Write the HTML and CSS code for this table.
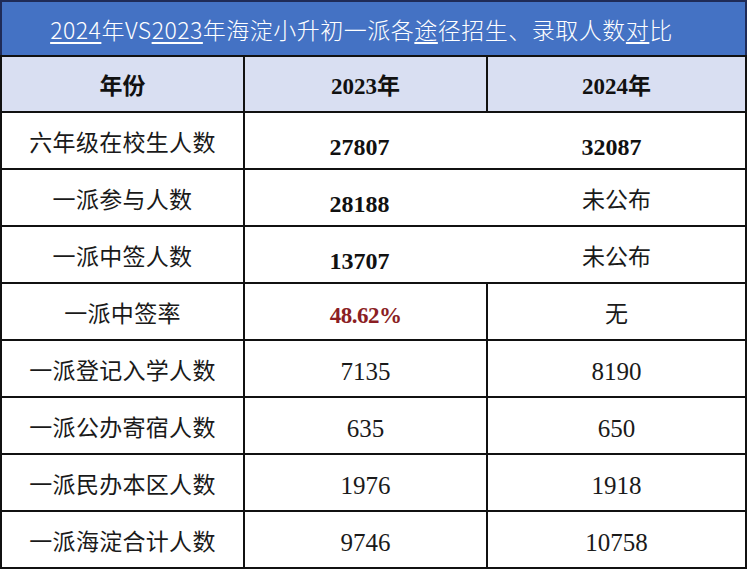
FILE: index.html
```html
<!DOCTYPE html>
<html lang="zh-CN">
<head>
<meta charset="utf-8">
<title>2024年VS2023年海淀小升初一派各途径招生、录取人数对比</title>
<link rel="stylesheet" href="styles.css">
</head>
<body>
<table class="sheet">
  <colgroup>
    <col class="c1">
    <col class="c2">
    <col class="c3">
  </colgroup>
  <tr class="title-row">
    <td colspan="3" class="title"><u>2024</u>年VS<u>2023</u>年海淀小升初一派各<u>途</u>径招生、录取人数<u>对</u>比</td>
  </tr>
  <tr class="head-row">
    <th>年份</th>
    <th class="num-head">2023年</th>
    <th class="num-head">2024年</th>
  </tr>
  <tr>
    <td class="label">六年级在校生人数</td>
    <td class="num bold low shift nr">27807</td>
    <td class="num bold low shift3 nl">32087</td>
  </tr>
  <tr>
    <td class="label">一派参与人数</td>
    <td class="num bold low shift nr">28188</td>
    <td class="cjk nl">未公布</td>
  </tr>
  <tr>
    <td class="label">一派中签人数</td>
    <td class="num bold low shift nr">13707</td>
    <td class="cjk nl">未公布</td>
  </tr>
  <tr>
    <td class="label">一派中签率</td>
    <td class="num rate lowish">48.62%</td>
    <td class="cjk">无</td>
  </tr>
  <tr>
    <td class="label">一派登记入学人数</td>
    <td class="num plain">7135</td>
    <td class="num plain">8190</td>
  </tr>
  <tr>
    <td class="label">一派公办寄宿人数</td>
    <td class="num plain">635</td>
    <td class="num plain">650</td>
  </tr>
  <tr>
    <td class="label">一派民办本区人数</td>
    <td class="num plain">1976</td>
    <td class="num plain">1918</td>
  </tr>
  <tr>
    <td class="label">一派海淀合计人数</td>
    <td class="num plain">9746</td>
    <td class="num plain">10758</td>
  </tr>
</table>
</body>
</html>
```

FILE: styles.css
```css
html, body {
  margin: 0;
  padding: 0;
  background: #ffffff;
}

.sheet {
  width: 747px;
  border-collapse: collapse;
  table-layout: fixed;
  font-family: "Noto Sans CJK SC", "Noto Sans", sans-serif;
  color: #111111;
}

.c1 { width: 243px; }
.c2 { width: 243px; }

.sheet td,
.sheet th {
  border: 2px solid #111111;
  padding: 0;
  text-align: center;
  vertical-align: middle;
}

.sheet tr { height: 57px; }
.sheet tr.title-row { height: 55px; }
.sheet tr.head-row { height: 56px; }

.sheet td.title {
  background: #4472c4;
  color: #ffffff;
  font-size: 23px;
  font-weight: 300;
  letter-spacing: 0.5px;
  padding-right: 24px;
  border-top-color: #1f2b57;
  border-left-color: #1f2b57;
  border-right-color: #1f2b57;
}

.title u {
  text-decoration-thickness: 1.5px;
  text-underline-offset: 3px;
}

.head-row th {
  background: #d9dff2;
  font-size: 23px;
  font-weight: 700;
  color: #111111;
}

.num-head {
  font-family: "Liberation Serif", "Noto Sans CJK SC", serif;
}

.label {
  font-size: 23px;
  font-weight: 400;
  letter-spacing: 0.3px;
  color: #1a1a1a;
}

.cjk {
  font-size: 23px;
  font-weight: 400;
  color: #1a1a1a;
}

.num {
  font-family: "Liberation Serif", serif;
  font-size: 24px;
}

.bold {
  font-weight: 700;
  color: #111111;
}

.sheet td.low { padding-top: 14px; }
.sheet td.shift { padding-right: 12px; }
.sheet td.shift3 { padding-right: 10px; }
.sheet td.lowish { padding-top: 8px; }

.rate {
  font-weight: 700;
  color: #8b1e24;
  font-size: 23px;
  letter-spacing: -0.5px;
}

.sheet td.plain {
  font-weight: 400;
  font-size: 25px;
  padding-top: 6px;
  color: #1a1a1a;
}

.sheet td.nr { border-right-color: transparent; }
.sheet td.nl { border-left-color: transparent; }
```
